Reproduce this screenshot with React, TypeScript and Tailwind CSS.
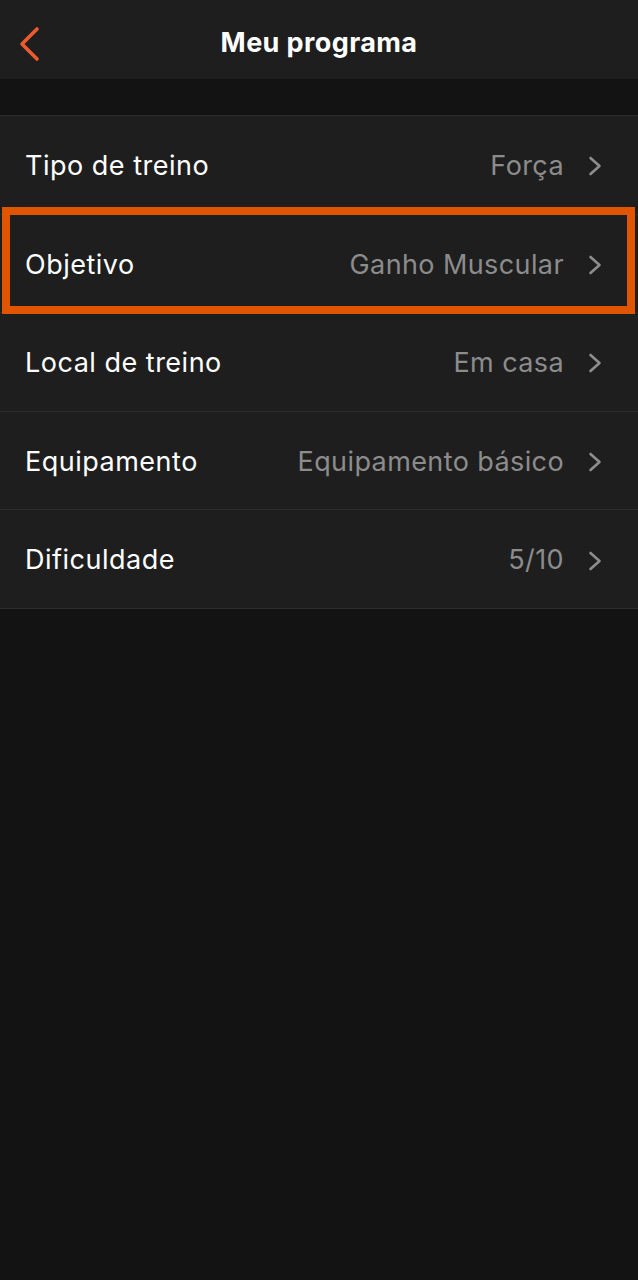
import React from "react";

const rows = [
  { label: "Tipo de treino", value: "Força" },
  { label: "Objetivo", value: "Ganho Muscular" },
  { label: "Local de treino", value: "Em casa" },
  { label: "Equipamento", value: "Equipamento básico" },
  { label: "Dificuldade", value: "5/10" },
];

function Chevron() {
  return (
    <svg width="14" height="20" viewBox="0 0 14 20" fill="none" className="shrink-0">
      <path d="M2.5 2 L11.5 10 L2.5 18" stroke="#8e8e8e" strokeWidth="2.6" strokeLinecap="round" strokeLinejoin="round" />
    </svg>
  );
}

export default function App() {
  return (
    <div
      className="relative w-[638px] h-[1280px] bg-[#131313] overflow-hidden"
      style={{ fontFamily: "Inter, 'Noto Sans', sans-serif" }}
    >
      <div className="relative h-[79px] bg-[#1e1e1e] flex items-center justify-center pt-[8px]">
        <svg width="24" height="36" viewBox="0 0 24 36" fill="none" className="absolute left-[17px] top-[26px]">
          <path d="M20 3 L5 18 L20 33" stroke="#ec5a2d" strokeWidth="3.6" strokeLinecap="round" strokeLinejoin="round" />
        </svg>
        <span className="text-white text-[27px] font-bold tracking-[0.4px]">Meu programa</span>
      </div>
      <div className="h-[36px]" />
      <div className="flex flex-col bg-[#1e1e1e] border-t border-[#2c2c2c]">
        {rows.map((r) => (
          <div key={r.label} className="h-[98.6px] flex items-center pl-[25px] pr-[36px] pt-[3px] border-b border-[#2c2c2c]">
            <span className="text-white text-[27px] tracking-[0.5px]">{r.label}</span>
            <span className="ml-auto text-[#8c8c8c] text-[27px] tracking-[0.4px] mr-[24px]">{r.value}</span>
            <Chevron />
          </div>
        ))}
      </div>
      <div className="absolute left-[2px] top-[207px] w-[633px] h-[107px] border-[8px] border-[#e05500]" />
    </div>
  );
}
